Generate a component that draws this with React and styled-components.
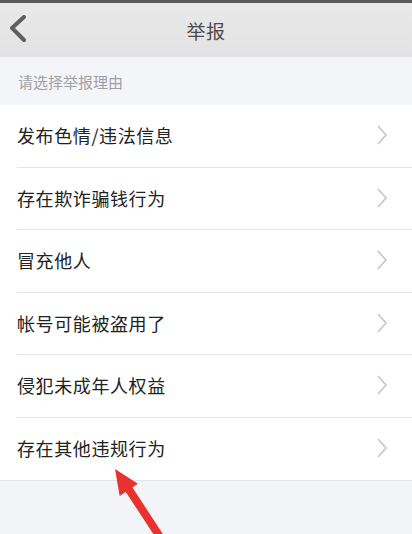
import React from "react";
import styled, { createGlobalStyle } from "styled-components";

const GlobalStyle = createGlobalStyle`
  html, body {
    margin: 0;
    padding: 0;
    background-color: #f3f4f8;
  }
  body {
    font-family: "Noto Sans CJK SC", "Noto Sans", sans-serif;
  }
`;

const Page = styled.div`
  position: relative;
  width: 412px;
  height: 534px;
  overflow: hidden;
  background-color: #f3f4f8;
`;

const StatusStrip = styled.div`
  height: 3px;
  background-color: #5b5b5b;
`;

const NavBar = styled.div`
  display: grid;
  grid-template-columns: 60px 1fr 60px;
  align-items: center;
  height: 54px;
  background: linear-gradient(#e9e9e9, #e2e2e2);
`;

const BackButton = styled.div`
  display: flex;
  align-items: center;
  padding-left: 9px;
  height: 100%;
`;

const Title = styled.div`
  text-align: center;
  font-size: 19px;
  color: #4a4a4a;
  letter-spacing: 0.5px;
`;

const SectionHeader = styled.div`
  display: flex;
  align-items: center;
  height: 48px;
  padding-left: 18px;
  font-size: 15px;
  color: #a0a0a4;
  background-color: #f4f5f9;
`;

const List = styled.div`
  background-color: #ffffff;
  border-bottom: 1px solid #e4e4e8;
`;

const Row = styled.div`
  display: flex;
  align-items: center;
  justify-content: space-between;
  height: 62.5px;
  box-sizing: border-box;
  margin-left: 17px;
  padding-right: 24px;
  padding-bottom: 1px;
  border-bottom: ${(props) => (props.$last ? "none" : "1px solid #e6e6ea")};
  font-size: 18px;
  color: #222222;
  letter-spacing: 0.6px;
`;

const Arrow = styled.svg`
  position: absolute;
  left: 0;
  top: 0;
  pointer-events: none;
`;

const reasons = [
  "发布色情/违法信息",
  "存在欺诈骗钱行为",
  "冒充他人",
  "帐号可能被盗用了",
  "侵犯未成年人权益",
  "存在其他违规行为",
];

function Chevron() {
  return (
    <svg width="12" height="22" viewBox="0 0 12 22">
      <polyline
        points="2,2 10,11 2,20"
        fill="none"
        stroke="#c5c5ca"
        strokeWidth="1.6"
      />
    </svg>
  );
}

export default function App() {
  return (
    <Page>
      <GlobalStyle />
      <StatusStrip />
      <NavBar>
        <BackButton>
          <svg width="20" height="30" viewBox="0 0 20 30">
            <polyline
              points="15,2 3,13 15,25"
              fill="none"
              stroke="#5e5e5e"
              strokeWidth="4"
              strokeLinejoin="round"
              strokeLinecap="round"
            />
          </svg>
        </BackButton>
        <Title>举报</Title>
        <div />
      </NavBar>
      <SectionHeader>请选择举报理由</SectionHeader>
      <List>
        {reasons.map((r, i) => (
          <Row key={r} $last={i === reasons.length - 1}>
            <span>{r}</span>
            <Chevron />
          </Row>
        ))}
      </List>
      <Arrow width="412" height="534" viewBox="0 0 412 534">
        <polygon points="115,469 119.7,495.9 137.9,483.8" fill="#e8322f" />
        <line
          x1="128"
          y1="488"
          x2="162"
          y2="540"
          stroke="#e8322f"
          strokeWidth="8"
        />
      </Arrow>
    </Page>
  );
}
